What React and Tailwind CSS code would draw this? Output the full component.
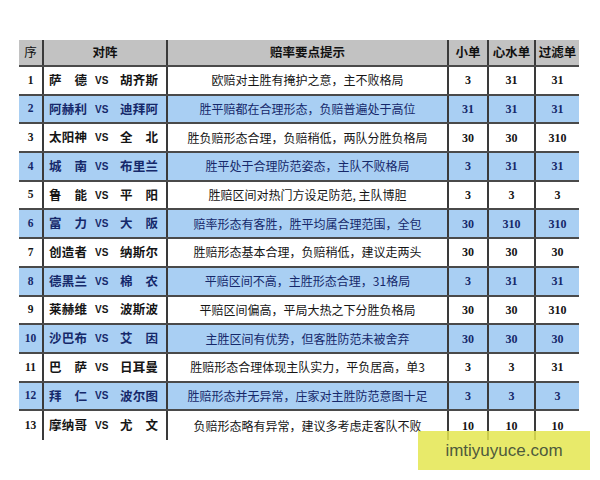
const rows = [
  ['1', '萨德', '胡齐斯', '欧赔对主胜有掩护之意，主不败格局', '3', '31', '31'],
  ['2', '阿赫利', '迪拜阿', '胜平赔都在合理形态，负赔普遍处于高位', '31', '31', '31'],
  ['3', '太阳神', '全北', '胜负赔形态合理，负赔稍低，两队分胜负格局', '30', '30', '310'],
  ['4', '城南', '布里兰', '胜平处于合理防范姿态，主队不败格局', '3', '31', '31'],
  ['5', '鲁能', '平阳', '胜赔区间对热门方设足防范, 主队博胆', '3', '3', '3'],
  ['6', '富力', '大阪', '赔率形态有客胜，胜平均属合理范围，全包', '30', '310', '310'],
  ['7', '创造者', '纳斯尔', '胜赔形态基本合理，负赔稍低，建议走两头', '30', '30', '30'],
  ['8', '德黑兰', '棉农', '平赔区间不高，主胜形态合理，31格局', '3', '31', '31'],
  ['9', '莱赫维', '波斯波', '平赔区间偏高，平局大热之下分胜负格局', '30', '30', '310'],
  ['10', '沙巴布', '艾因', '主胜区间有优势，但客胜防范未被舍弃', '30', '30', '30'],
  ['11', '巴萨', '日耳曼', '胜赔形态合理体现主队实力，平负居高，单3', '3', '3', '31'],
  ['12', '拜仁', '波尔图', '胜赔形态并无异常，庄家对主胜防范意图十足', '3', '3', '3'],
  ['13', '摩纳哥', '尤文', '负赔形态略有异常，建议多考虑走客队不败', '10', '10', '10'],
];

const cols = 'grid grid-cols-[23px_124px_281px_40px_47px_45px]';

// team name spread across a fixed width, like the spaced 2-char names
function Team({ name }) {
  return (
    <span className="flex w-[38px] justify-between font-bold text-[12.5px]">
      {name.split('').map((c, i) => (
        <span key={i}>{c}</span>
      ))}
    </span>
  );
}

function Row({ data, blue, last }) {
  const [no, home, away, tip, a, b, c] = data;
  const tone = blue ? 'bg-[#a9cff3] text-[#15286a]' : 'bg-white text-[#151515]';
  const num = 'flex items-center justify-center border-l-2 border-[#3a3a3a] font-bold text-[12px] font-["Liberation_Serif",serif]';
  return (
    <div className={`${cols} h-[28.7px] ${tone} ${last ? '' : 'border-b-2 border-[#4a4a4a]'}`}>
      <div className="flex items-center justify-center font-bold text-[11.5px] font-['Liberation_Serif',serif]">{no}</div>
      <div className="flex items-center border-l-2 border-[#3a3a3a] pl-[5px]">
        <Team name={home} />
        <span className="ml-[8px] w-[22px] font-bold text-[10px] font-['Liberation_Sans',sans-serif]">VS</span>
        <span className="ml-[3px]">
          <Team name={away} />
        </span>
      </div>
      <div className="flex items-center justify-center border-l-2 border-[#3a3a3a] text-[12px]">{tip}</div>
      <div className={num}>{a}</div>
      <div className={num}>{b}</div>
      <div className={num}>{c}</div>
    </div>
  );
}

export default function App() {
  return (
    <div className="relative h-[480px] w-[600px] bg-white font-['Noto_Sans_CJK_SC',sans-serif]">
      <div className="pl-[19px] pt-[40px]">
        <div className="w-[560px]">
          <div className={`${cols} h-[27px] bg-[#c2c2c2] text-[#111] text-[12.5px] border-b-2 border-[#4a4a4a]`}>
            <div className="flex items-center justify-center">序</div>
            <div className="flex items-center justify-center border-l-2 border-[#3a3a3a] font-bold">对阵</div>
            <div className="flex items-center justify-center border-l-2 border-[#3a3a3a] font-bold">赔率要点提示</div>
            <div className="flex items-center justify-center border-l-2 border-[#3a3a3a] font-bold">小单</div>
            <div className="flex items-center justify-center border-l-2 border-[#3a3a3a] font-bold">心水单</div>
            <div className="flex items-center justify-center border-l-2 border-[#3a3a3a] font-bold">过滤单</div>
          </div>
          {rows.map((r, i) => (
            <Row key={r[0]} data={r} blue={i % 2 === 1} last={i === rows.length - 1} />
          ))}
        </div>
      </div>
      <div className="absolute left-[418px] top-[431px] flex h-[39px] w-[172px] items-center justify-center bg-[#e4e650]/85 text-[17px] text-[#4e5a3c] font-['Liberation_Sans',sans-serif]">
        imtiyuyuce.com
      </div>
    </div>
  );
}
